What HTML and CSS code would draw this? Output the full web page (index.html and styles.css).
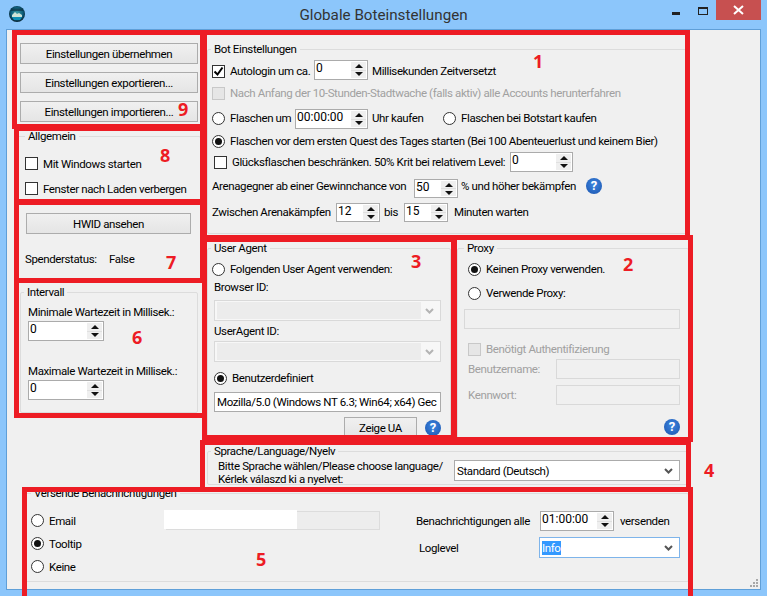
FILE: index.html
```html
<!DOCTYPE html>
<html lang="de">
<head>
  <meta charset="UTF-8"/>
  <meta name="viewport" content="width=device-width, initial-scale=1.0"/>
  <title>Globale Boteinstellungen</title>
  <link rel="stylesheet" href="styles.css">
</head>
<body>
  <svg class="defs" width="0" height="0">
    <symbol id="chev" viewBox="0 0 9 6">
      <path d="M1 1l3.500 3.500L8 1" fill="none" stroke="currentColor" stroke-width="2"/>
    </symbol>
  </svg>

  <header class="titlebar">
    <svg class="app-icon" width="16" height="16" viewBox="0 0 16 16">
      <defs>
        <radialGradient id="ball" cx="50%" cy="45%" r="55%">
          <stop offset="0" stop-color="#3fa0a8"/>
          <stop offset="0.7" stop-color="#0c5a78"/>
          <stop offset="1" stop-color="#06202e"/>
        </radialGradient>
      </defs>
      <circle cx="8" cy="8" r="8" fill="url(#ball)"/>
      <path d="M3 9l3-3 2 2 2-1 3 2v2H3z" fill="#cfe3d6"/>
      <path d="M2 2.500h12v2.500H2z" fill="#0b2a3a" opacity="0.6"/>
      <path d="M3 11h10l-2 3H5z" fill="#0f8fb4"/>
    </svg>
    <h1 class="title">Globale Boteinstellungen</h1>
    <div class="winbtns">
      <span class="win-min"></span>
      <span class="win-max"></span>
      <span class="win-close">
        <svg width="11" height="10" viewBox="0 0 11 10"><path d="M1 1l9 8M10 1l-9 8" stroke="#fff" stroke-width="2" fill="none"/></svg>
      </span>
    </div>
  </header>

  <main class="client">
    <div class="columns">
      <div class="left">
        <div class="buttons">
          <button class="btn">Einstellungen übernehmen</button>
          <button class="btn">Einstellungen exportieren...</button>
          <button class="btn">Einstellungen importieren...</button>
        </div>

        <fieldset class="group general">
          <legend>Allgemein</legend>
          <div class="row h25"><span class="box"></span><span class="txt">Mit Windows starten</span></div>
          <div class="row h25"><span class="box"></span><span class="txt">Fenster nach Laden verbergen</span></div>
        </fieldset>

        <div class="hwid">
          <button class="btn">HWID ansehen</button>
          <div class="donor"><span class="donor-label">Spenderstatus:</span><span>False</span></div>
        </div>

        <fieldset class="group interval">
          <legend>Intervall</legend>
          <div class="field-label first">Minimale Wartezeit in Millisek.:</div>
          <div class="spin w76"><span class="val">0</span><span class="arrows"><i></i><i></i></span></div>
          <div class="field-label second">Maximale Wartezeit in Millisek.:</div>
          <div class="spin w76"><span class="val">0</span><span class="arrows"><i></i><i></i></span></div>
        </fieldset>
      </div>

      <div class="right">
        <fieldset class="group bot">
          <legend>Bot Einstellungen</legend>
          <div class="bot-rows">
            <div class="row">
              <span class="box on"><svg width="11" height="11" viewBox="0 0 11 11"><path d="M1.500 5.500l3 3 5-7" fill="none" stroke="#000" stroke-width="2"/></svg></span>
              <span class="txt w84">Autologin um ca.</span>
              <div class="spin w54 login-spin"><span class="val">0</span><span class="arrows"><i></i><i></i></span></div>
              <span class="after">Millisekunden Zeitversetzt</span>
            </div>
            <div class="row off">
              <span class="box dis"></span>
              <span class="txt">Nach Anfang der 10-Stunden-Stadtwache (falls aktiv) alle Accounts herunterfahren</span>
            </div>
            <div class="row">
              <span class="radio"></span>
              <span class="txt w65">Flaschen um</span>
              <div class="spin w73 time-spin"><span class="val">00:00:00</span><span class="arrows"><i></i><i></i></span></div>
              <span class="after w71">Uhr kaufen</span>
              <span class="radio"></span>
              <span class="txt">Flaschen bei Botstart kaufen</span>
            </div>
            <div class="row">
              <span class="radio on"></span>
              <span class="txt">Flaschen vor dem ersten Quest des Tages starten (Bei 100 Abenteuerlust und keinem Bier)</span>
            </div>
            <div class="row indent">
              <span class="box"></span>
              <span class="txt w278">Glücksflaschen beschränken. 50% Krit bei relativem Level:</span>
              <div class="spin w63"><span class="val">0</span><span class="arrows"><i></i><i></i></span></div>
            </div>
            <div class="row">
              <span class="w202">Arenagegner ab einer Gewinnchance von</span>
              <div class="spin w44 chance-spin"><span class="val">50</span><span class="arrows"><i></i><i></i></span></div>
              <span class="pct">% und höher bekämpfen</span>
              <span class="help">?</span>
            </div>
            <div class="row">
              <span class="w124">Zwischen Arenakämpfen</span>
              <div class="spin w44 wait-spin"><span class="val">12</span><span class="arrows"><i></i><i></i></span></div>
              <span class="bis">bis</span>
              <div class="spin w44 wait-spin"><span class="val">15</span><span class="arrows"><i></i><i></i></span></div>
              <span class="minutes">Minuten warten</span>
            </div>
          </div>
        </fieldset>

        <div class="pair">
          <fieldset class="group agent">
            <legend>User Agent</legend>
            <div class="row h18 agent-first"><span class="radio"></span><span class="txt">Folgenden User Agent verwenden:</span></div>
            <div class="field-label browser">Browser ID:</div>
            <div class="combo dis"><span class="combo-val"></span><svg class="chev" width="9" height="6"><use href="#chev"/></svg></div>
            <div class="field-label ua-id">UserAgent ID:</div>
            <div class="combo dis"><span class="combo-val"></span><svg class="chev" width="9" height="6"><use href="#chev"/></svg></div>
            <div class="row h18 agent-custom"><span class="radio on"></span><span class="txt">Benutzerdefiniert</span></div>
            <div class="textbox ua-text"><span class="clip">Mozilla/5.0 (Windows NT 6.3; Win64; x64) Gec</span></div>
            <div class="ua-actions"><button class="btn ua-btn">Zeige UA</button><span class="help">?</span></div>
          </fieldset>

          <fieldset class="group proxy">
            <legend>Proxy</legend>
            <div class="row h24 proxy-first"><span class="radio on"></span><span class="txt">Keinen Proxy verwenden.</span></div>
            <div class="row h24"><span class="radio"></span><span class="txt">Verwende Proxy:</span></div>
            <div class="textbox dis proxy-host"></div>
            <div class="row h18 off proxy-auth"><span class="box dis"></span><span class="txt">Benötigt Authentifizierung</span></div>
            <div class="cred off"><span class="cred-label">Benutzername:</span><div class="textbox dis cred-input"></div></div>
            <div class="cred off"><span class="cred-label">Kennwort:</span><div class="textbox dis cred-input"></div></div>
            <div class="proxy-help"><span class="help">?</span></div>
          </fieldset>
        </div>

        <fieldset class="group language">
          <legend>Sprache/Language/Nyelv</legend>
          <div class="lang-row">
            <div class="lang-text">Bitte Sprache wählen/Please choose language/<br>Kérlek válaszd ki a nyelvet:</div>
            <div class="combo lang-combo"><span class="combo-text">Standard (Deutsch)</span><svg class="chev" width="9" height="6"><use href="#chev"/></svg></div>
          </div>
        </fieldset>
      </div>
    </div>

    <fieldset class="group notify">
      <legend>Versende Benachrichtigungen</legend>
      <div class="notify-body">
        <div class="notify-kinds">
          <div class="row h23"><span class="radio"></span><span class="txt">Email</span></div>
          <div class="row h23"><span class="radio on"></span><span class="txt">Tooltip</span></div>
          <div class="row h23"><span class="radio"></span><span class="txt">Keine</span></div>
        </div>
        <div class="blank"><div class="blank-fill"></div></div>
        <div class="notify-form">
          <div class="row">
            <span class="w124">Benachrichtigungen alle</span>
            <div class="spin w74"><span class="val">01:00:00</span><span class="arrows"><i></i><i></i></span></div>
            <span class="send">versenden</span>
          </div>
          <div class="row loglevel">
            <span class="w120">Loglevel</span>
            <div class="combo focus"><span class="combo-text"><span class="selected">Info</span></span><svg class="chev" width="9" height="6"><use href="#chev"/></svg></div>
          </div>
        </div>
      </div>
    </fieldset>

    <svg class="grip" width="9" height="9" viewBox="0 0 9 9">
      <path d="M6 0h2v2H6zM3 3h2v2H3zM6 3h2v2H6zM0 6h2v2H0zM3 6h2v2H3zM6 6h2v2H6z" fill="#a8a8a8"/>
    </svg>
  </main>

  <!-- red annotation frames drawn over the screenshot -->
  <div class="mark m9"></div>
  <div class="mark m8"></div>
  <div class="mark m7"></div>
  <div class="mark m6"></div>
  <div class="mark m1"></div>
  <div class="mark m3"></div>
  <div class="mark m2"></div>
  <div class="mark m4"></div>
  <div class="mark m5"></div>
  <span class="num n1">1</span>
  <span class="num n2">2</span>
  <span class="num n3">3</span>
  <span class="num n4">4</span>
  <span class="num n5">5</span>
  <span class="num n6">6</span>
  <span class="num n7">7</span>
  <span class="num n8">8</span>
  <span class="num n9">9</span>
</body>
</html>
```

FILE: styles.css
```css
* {
  box-sizing: border-box;
}

html,
body {
  margin: 0;
  height: 596px;
  overflow: hidden;
}

body {
  position: relative;
  background: #8cc6fb;
  color: #000;
  font-family: Roboto, 'Open Sans', sans-serif;
  font-size: 11.5px;
  letter-spacing: -0.38px;
  line-height: 16px;
}

.defs {
  position: absolute;
}

/* title bar */
.titlebar {
  display: flex;
  align-items: flex-start;
  height: 29px;
  padding-left: 9px;
}

.app-icon {
  margin-top: 6px;
}

.title {
  flex: 1;
  margin: 5px 0 0;
  padding-left: 70px;
  font-size: 15.2px;
  font-weight: 400;
  letter-spacing: 0;
  line-height: 20px;
  text-align: center;
  color: #333;
}

.winbtns {
  display: flex;
  margin-right: 6px;
}

.win-min {
  width: 8px;
  height: 3px;
  margin: 12px 18px 0 0;
  background: #222;
}

.win-max {
  width: 10px;
  height: 8px;
  margin: 7px 8px 0 0;
  border: 1px solid #222;
  border-top-width: 2px;
}

.win-close {
  display: flex;
  align-items: center;
  justify-content: center;
  width: 45px;
  height: 20px;
  background: #c75050;
}

/* client area */
.client {
  position: relative;
  height: 561px;
  margin: 0 6px;
  padding: 11px 0 0 13px;
  background: #f0f0f0;
  border: 1px solid #5f9fd8;
}

.columns {
  display: flex;
  gap: 9px;
}

.left {
  width: 178px;
  padding-top: 2px;
}

.right {
  width: 482px;
}

.buttons {
  display: flex;
  flex-direction: column;
  gap: 8px;
}

.btn {
  display: block;
  width: 100%;
  height: 21px;
  padding: 0;
  border: 1px solid #acacac;
  background: linear-gradient(#f0f0f0, #e5e5e5);
  color: #000;
  font: inherit;
  letter-spacing: inherit;
}

/* group boxes */
.group {
  margin: 0;
  padding: 0;
  min-width: 0;
  border: 1px solid #dcdcdc;
  border-radius: 2px;
}

.group legend {
  margin-left: 3px;
  padding: 0 3px;
  line-height: 16px;
}

.row {
  display: flex;
  align-items: center;
}

.h18 { height: 18px; }
.h23 { height: 23px; }
.h24 { height: 24px; }
.h25 { height: 25px; }

.off {
  color: #a0a0a0;
}

.box,
.radio {
  flex: none;
  display: flex;
  align-items: center;
  justify-content: center;
  width: 13px;
  height: 13px;
  border: 1px solid #333;
  background: #fff;
}

.radio {
  border-radius: 50%;
}

.radio.on::after {
  content: "";
  width: 7px;
  height: 7px;
  border-radius: 50%;
  background: #111;
}

.box.dis {
  border-color: #c8c8c8;
  background: #e6e6e6;
}

.txt {
  margin-left: 5px;
  white-space: nowrap;
}

/* spin boxes */
.spin {
  flex: none;
  display: flex;
  height: 20px;
  border: 1px solid #ababab;
  background: #fff;
}

.val {
  flex: 1;
  padding-left: 1px;
  font-size: 12px;
  letter-spacing: 0;
  line-height: 15px;
}

.arrows {
  display: flex;
  flex-direction: column;
  width: 15px;
  margin: 1px;
  background: #e0e0e0;
  gap: 1px;
}

.arrows i {
  flex: 1;
  display: flex;
  align-items: center;
  justify-content: center;
  background: #efefef;
}

.arrows i::after {
  content: "";
  border-left: 4px solid transparent;
  border-right: 4px solid transparent;
}

.arrows i:first-child::after {
  border-bottom: 4px solid #111;
}

.arrows i:last-child::after {
  border-top: 4px solid #111;
}

.w44 { width: 44px; }
.w54 { width: 54px; }
.w63 { width: 63px; }
.w73 { width: 73px; }
.w74 { width: 74px; }
.w76 { width: 76px; }

.login-spin { margin-bottom: 2px; }
.time-spin { margin-top: 2px; }
.chance-spin { height: 19px; margin-top: 5px; }
.wait-spin { height: 19px; margin-top: 1px; }

span.w65 { width: 65px; flex: none; }
span.w71 { width: 71px; flex: none; }
span.w84 { width: 84px; flex: none; }
span.w120 { width: 120px; flex: none; white-space: nowrap; }
span.w124 { width: 124px; flex: none; white-space: nowrap; }
span.w202 { width: 202px; flex: none; white-space: nowrap; }
span.w278 { width: 278px; flex: none; }

.after {
  margin-left: 4px;
  white-space: nowrap;
}

.help {
  flex: none;
  display: block;
  width: 16px;
  height: 16px;
  border-radius: 50%;
  background: radial-gradient(circle at 50% 40%, #3d86e0, #1a53ad);
  color: #fff;
  font-size: 13px;
  font-weight: 700;
  letter-spacing: 0;
  line-height: 16px;
  text-align: center;
}

.field-label {
  height: 16px;
  white-space: nowrap;
}

/* left column */
.general {
  margin: 6px -3px 0;
  height: 75px;
}

.general legend {
  margin-left: 7px;
}

.general .row {
  padding-left: 7px;
}

.general .row:first-of-type {
  margin-top: 7px;
}

.hwid {
  padding: 10px 7px 0 6px;
}

.donor {
  margin: 17px 0 0 -1px;
  display: flex;
  white-space: nowrap;
}

.donor-label {
  width: 84px;
}

.interval {
  margin-top: 17px;
  height: 129px;
}

.interval .field-label,
.interval .spin {
  margin-left: 7px;
}

.interval .first { margin-top: 4px; }
.interval .second { margin-top: 22px; }
.interval .spin { margin-top: 1px; }

/* bot settings */
.bot {
  height: 193px;
}

.bot-rows {
  display: grid;
  grid-template-rows: 22px 22px 28px 18px 24px 24px 28px;
  padding: 3px 0 0 4px;
  white-space: nowrap;
}

.indent {
  padding-left: 2px;
}

.pct {
  margin-left: 3px;
  width: 125px;
}

.bis {
  margin: 0 0 0 4px;
  width: 20px;
}

.minutes {
  margin-left: 6px;
}

.pair {
  display: flex;
  gap: 6px;
  margin-top: 6px;
}

/* combos and text boxes */
.combo {
  position: relative;
  display: flex;
  align-items: center;
  height: 21px;
  border: 1px solid #ababab;
  background: #fff;
}

.combo.dis {
  border-color: #d9d9d9;
  background: #f7f7f7;
  color: #a8a8a8;
}

.combo-val {
  flex: 1;
  height: 17px;
  margin: 0 19px 0 2px;
  background: #ececec;
}

.combo-text {
  flex: 1;
  padding-left: 2px;
  white-space: nowrap;
}

.chev {
  position: absolute;
  right: 6px;
  top: 7px;
  color: #555;
}

.combo.dis .chev {
  color: #b4b4b4;
}

.textbox {
  height: 20px;
  border: 1px solid #ababab;
  background: #fff;
  padding-left: 2px;
  line-height: 18px;
  overflow: hidden;
}

.textbox.dis {
  border-color: #d9d9d9;
  background: #f0f0f0;
}

.clip {
  display: block;
  white-space: nowrap;
  overflow: hidden;
}

/* user agent */
.agent {
  width: 244px;
  height: 200px;
  padding: 0 9px 0 6px;
}

.agent legend {
  margin-left: -3px;
}

.agent-first {
  margin: 4px 0 0 -2px;
}

.browser {
  margin-top: 1px;
  height: 17px;
}

.agent .combo {
  margin-top: 4px;
}

.ua-id {
  margin-top: 2px;
}

.agent .ua-id + .combo {
  margin-top: 2px;
}

.agent-custom {
  margin-top: 7px;
}

.ua-text {
  margin-top: 5px;
}

.ua-actions {
  display: flex;
  justify-content: flex-end;
  align-items: center;
  gap: 8px;
  margin-top: 5px;
}

.ua-btn {
  width: 73px;
}

/* proxy */
.proxy {
  width: 232px;
  height: 200px;
  padding: 0 8px 0 6px;
}

.proxy legend {
  margin-left: 0;
}

.proxy .row {
  padding-left: 4px;
}

.proxy-first {
  margin-top: 1px;
}

.proxy-host {
  margin-top: 4px;
}

.proxy-auth {
  margin-top: 11px;
}

.cred {
  display: flex;
  align-items: center;
  margin-top: 6px;
}

.proxy-auth + .cred {
  margin-top: 1px;
}

.cred-label {
  width: 92px;
  padding-left: 4px;
}

.cred-input {
  flex: 1;
}

.proxy-help {
  display: flex;
  justify-content: flex-end;
  margin-top: 14px;
}

/* language */
.language {
  height: 42px;
  margin-top: 3px;
  width: 482px;
}

.lang-row {
  display: flex;
  align-items: flex-start;
  padding-left: 10px;
  margin-top: 1px;
}

.lang-text {
  width: 236px;
  line-height: 13px;
  white-space: nowrap;
}

.lang-combo {
  width: 226px;
}

/* notifications */
.notify {
  height: 97px;
  width: 664px;
  margin: 0 0 0 5px;
}

.notify legend {
  margin-left: 5px;
}

.notify-body {
  display: flex;
  padding-top: 9px;
}

.notify-kinds {
  width: 137px;
  margin-top: -1px;
  padding-left: 5px;
}

.blank {
  width: 214px;
  height: 19px;
  margin: 1px 0 0 3px;
  border: 1px solid #dcdcdc;
  background: #ededed;
}

.blank-fill {
  width: 133px;
  height: 19px;
  margin: -2px 0 0 -3px;
  background: #fff;
}

.notify-form {
  margin-left: 36px;
  padding-top: 1px;
}

.send {
  margin-left: 6px;
}

.loglevel {
  margin: 6px 0 0 3px;
}

.loglevel .combo {
  width: 141px;
}

.focus {
  border-color: #7eb4ea;
}

.selected {
  background: #3399ff;
  color: #fff;
}

.grip {
  position: absolute;
  right: 1px;
  bottom: 1px;
}

/* annotations, over everything else */
.mark {
  position: absolute;
  border: 5px solid #ed1c24;
  pointer-events: none;
}

.m9 { left: 12px; top: 30px; width: 193px; height: 99px; }
.m8 { left: 14px; top: 126px; width: 191px; height: 78px; }
.m7 { left: 14px; top: 200px; width: 191px; height: 83px; }
.m6 { left: 14px; top: 278px; width: 193px; height: 140px; }
.m1 { left: 202px; top: 30px; width: 488px; height: 210px; }
.m3 { left: 202px; top: 237px; width: 254px; height: 203px; }
.m2 { left: 452px; top: 235px; width: 241px; height: 207px; }
.m4 { left: 200px; top: 440px; width: 491px; height: 52px; }
.m5 { left: 22px; top: 487px; width: 671px; height: 130px; }

.num {
  position: absolute;
  color: #ed1c24;
  font-family: 'Open Sans', sans-serif;
  font-size: 18px;
  font-weight: 700;
  letter-spacing: 0;
  line-height: 18px;
}

.n1 { left: 533px; top: 52px; }
.n2 { left: 623px; top: 255px; }
.n3 { left: 411px; top: 252px; }
.n4 { left: 704px; top: 461px; }
.n5 { left: 256px; top: 550px; }
.n6 { left: 132px; top: 328px; }
.n7 { left: 166px; top: 253px; }
.n8 { left: 160px; top: 146px; }
.n9 { left: 178px; top: 100px; }
```
